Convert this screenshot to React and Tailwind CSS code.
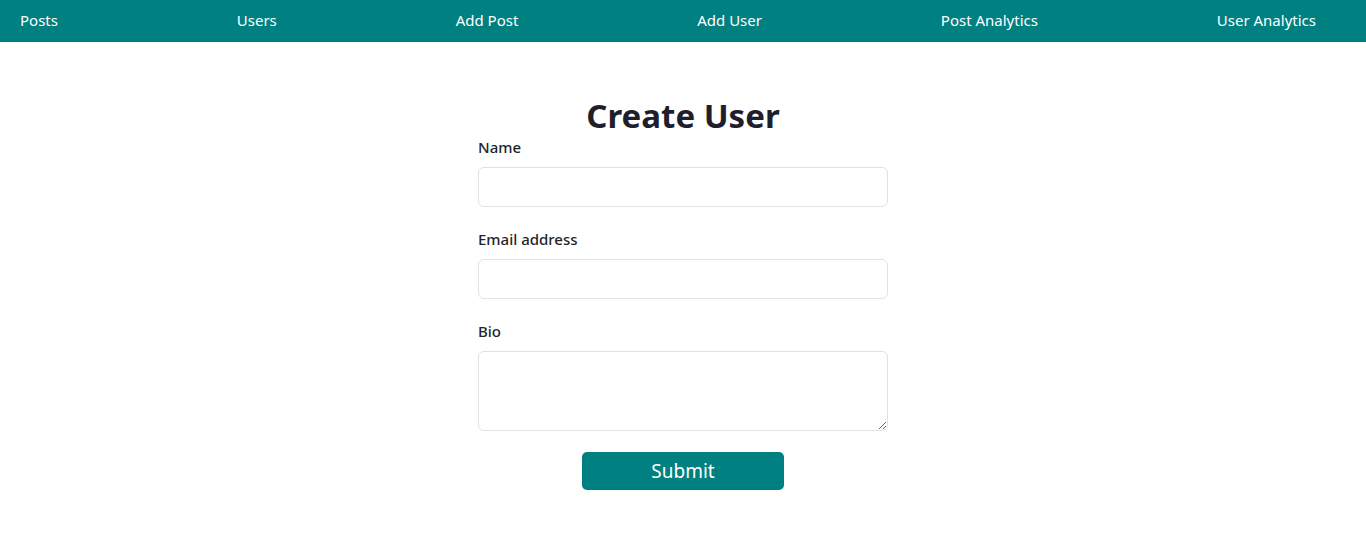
export default function App() {
  const items = ["Posts", "Users", "Add Post", "Add User", "Post Analytics", "User Analytics"];
  return (
    <div className="min-h-[550px] bg-white" style={{ fontFamily: '"Noto Sans", "Open Sans", sans-serif' }}>
      <nav className="h-[42px] bg-[#008080] flex items-center justify-between pl-5 pr-[50px] pb-[2px]">
        {items.map((t) => (
          <a key={t} className="text-white text-[15px] leading-none">{t}</a>
        ))}
      </nav>
      <div className="w-[410px] mx-auto pt-[54px]">
        <h1 className="text-center text-[33px] font-bold leading-[1.2] text-[#1e1e2c] mb-[-1px]">Create User</h1>
        <div className="flex flex-col gap-[20px]">
          <div>
            <label className="block text-[15px] font-medium leading-6 mb-2 text-[#212529]">Name</label>
            <input className="block w-full h-[40px] border border-[#dee2e6] rounded-[6px] px-3" />
          </div>
          <div>
            <label className="block text-[15px] font-medium leading-6 mb-2 text-[#212529]">Email address</label>
            <input className="block w-full h-[40px] border border-[#dee2e6] rounded-[6px] px-3" />
          </div>
          <div>
            <label className="block text-[15px] font-medium leading-6 mb-2 text-[#212529]">Bio</label>
            <textarea className="block w-full h-[80px] border border-[#dee2e6] rounded-[6px] px-3 py-2" />
          </div>
        </div>
        <div className="flex justify-center mt-[21px]">
          <button className="w-[202px] h-[38px] bg-[#008080] text-white text-[19px] rounded-[5px] leading-none pt-[2px]">Submit</button>
        </div>
      </div>
    </div>
  );
}
